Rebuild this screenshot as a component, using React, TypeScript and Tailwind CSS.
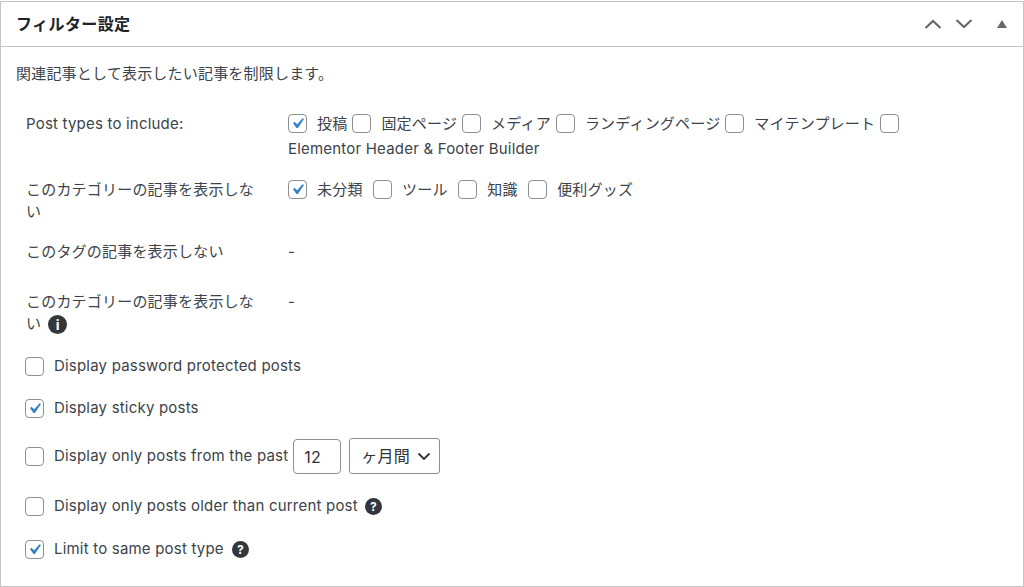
const font = "font-['Inter','Noto_Sans_CJK_JP',sans-serif]";

const Box = ({ checked = false, className = "" }: { checked?: boolean; className?: string }) => (
  <span className={`inline-flex items-center justify-center w-[19px] h-[19px] rounded-[4px] border border-[#8c8f94] bg-white align-middle shrink-0 ${className}`}>
    {checked && (
      <svg width="21" height="21" viewBox="0 0 20 20" className="shrink-0">
        <path d="M14.83 4.89l1.34.94-5.81 8.38H9.02L5.78 9.67l1.34-1.25 2.57 2.4z" fill="#3582c4" />
      </svg>
    )}
  </span>
);

const Badge = ({ char, size = "w-[17px] h-[17px] text-[12px]" }: { char: string; size?: string }) => (
  <span className={`inline-flex items-center justify-center rounded-full bg-[#32373c] text-white font-bold leading-none align-middle tracking-normal ${size}`}>
    {char}
  </span>
);

const Option = ({ checked = false, label, gap = "mr-[5px]" }: { checked?: boolean; label: string; gap?: string }) => (
  <>
    <Box checked={checked} className="mr-[10px] -mt-[3px]" />
    <span className={gap}>{label}</span>
  </>
);

const CheckRow = ({ checked = false, className = "", children }: { checked?: boolean; className?: string; children: React.ReactNode }) => (
  <div className={`flex items-center ${className}`}>
    <Box checked={checked} className="mr-[10px]" />
    {children}
  </div>
);

export default function App() {
  return (
    <div className={`${font} w-[1024px] h-[587px] bg-white pt-px text-[#3c434a] text-[15px] tracking-[0.2px] leading-[22px] overflow-hidden`}>
      <div className="h-[586px] border border-[#c3c4c7]">
        <div className="flex items-center justify-between h-[45px] border-b border-[#c3c4c7] pl-[15px] pr-[16px]">
          <h2 className="text-[16px] font-bold tracking-[0.4px] text-[#1d2327]">フィルター設定</h2>
          <div className="flex items-center text-[#646970]">
            <svg width="18" height="12" viewBox="0 0 18 12" fill="none" stroke="currentColor" strokeWidth="2.2"><path d="M1.5 10L9 3l7.5 7" /></svg>
            <svg className="ml-[13px]" width="18" height="12" viewBox="0 0 18 12" fill="none" stroke="currentColor" strokeWidth="2.2"><path d="M1.5 2L9 9l7.5-7" /></svg>
            <svg className="ml-[24px]" width="10" height="8" viewBox="0 0 10 8" fill="currentColor"><path d="M5 0l5 8H0z" /></svg>
          </div>
        </div>

        <div className="pl-[15px]">
          <p className="mt-[16px]">関連記事として表示したい記事を制限します。</p>

          <div className="grid grid-cols-[262px_1fr] pl-[10px] mt-[26px]">
            <div className="pt-[2px]">Post types to include:</div>
            <div className="leading-[25px] w-[640px]">
              <Option checked label="投稿" />
              <Option label="固定ページ" />
              <Option label="メディア" />
              <Option label="ランディングページ" />
              <Option label="マイテンプレート" />
              <Box className="-mt-[3px] mr-[10px]" />
              <span>Elementor Header &amp; Footer Builder</span>
            </div>

            <div className="mt-[18px] w-[236px]">このカテゴリーの記事を表示しない</div>
            <div className="mt-[16px] leading-[25px]">
              <Option checked label="未分類" gap="mr-[10.5px]" />
              <Option label="ツール" gap="mr-[10.5px]" />
              <Option label="知識" gap="mr-[10.5px]" />
              <Option label="便利グッズ" />
            </div>

            <div className="mt-[18px]">このタグの記事を表示しない</div>
            <div className="mt-[18px]">-</div>

            <div className="mt-[28px] w-[236px]">
              このカテゴリーの記事を表示しない
              <Badge char="i" size="w-[19px] h-[19px] text-[14px] ml-[7px]" />
            </div>
            <div className="mt-[28px]">-</div>
          </div>

          <div className="pl-[9px] mt-[20px]">
            <CheckRow>Display password protected posts</CheckRow>
            <CheckRow checked className="mt-[20px]">Display sticky posts</CheckRow>
            <CheckRow className="mt-[19px]">
              Display only posts from the past
              <span className="ml-[5px] mt-[1px] w-[48px] h-[35px] rounded-[4px] border border-[#8c8f94] flex items-center pl-[10px] text-[16px] text-[#2c3338]">12</span>
              <span className="ml-[8px] w-[91px] h-[36px] rounded-[3px] border border-[#8c8f94] flex items-center justify-between pl-[11px] pr-[8px] text-[16px] text-[#2c3338]">
                ヶ月間
                <svg width="14" height="10" viewBox="0 0 14 10" fill="none" stroke="currentColor" strokeWidth="1.8"><path d="M1.5 2.5L7 8l5.5-5.5" /></svg>
              </span>
            </CheckRow>
            <CheckRow className="mt-[21px]">
              Display only posts older than current post
              <span className="ml-[7px]"><Badge char="?" /></span>
            </CheckRow>
            <CheckRow checked className="mt-[21px]">
              Limit to same post type
              <span className="ml-[8px]"><Badge char="?" /></span>
            </CheckRow>
          </div>
        </div>
      </div>
    </div>
  );
}
